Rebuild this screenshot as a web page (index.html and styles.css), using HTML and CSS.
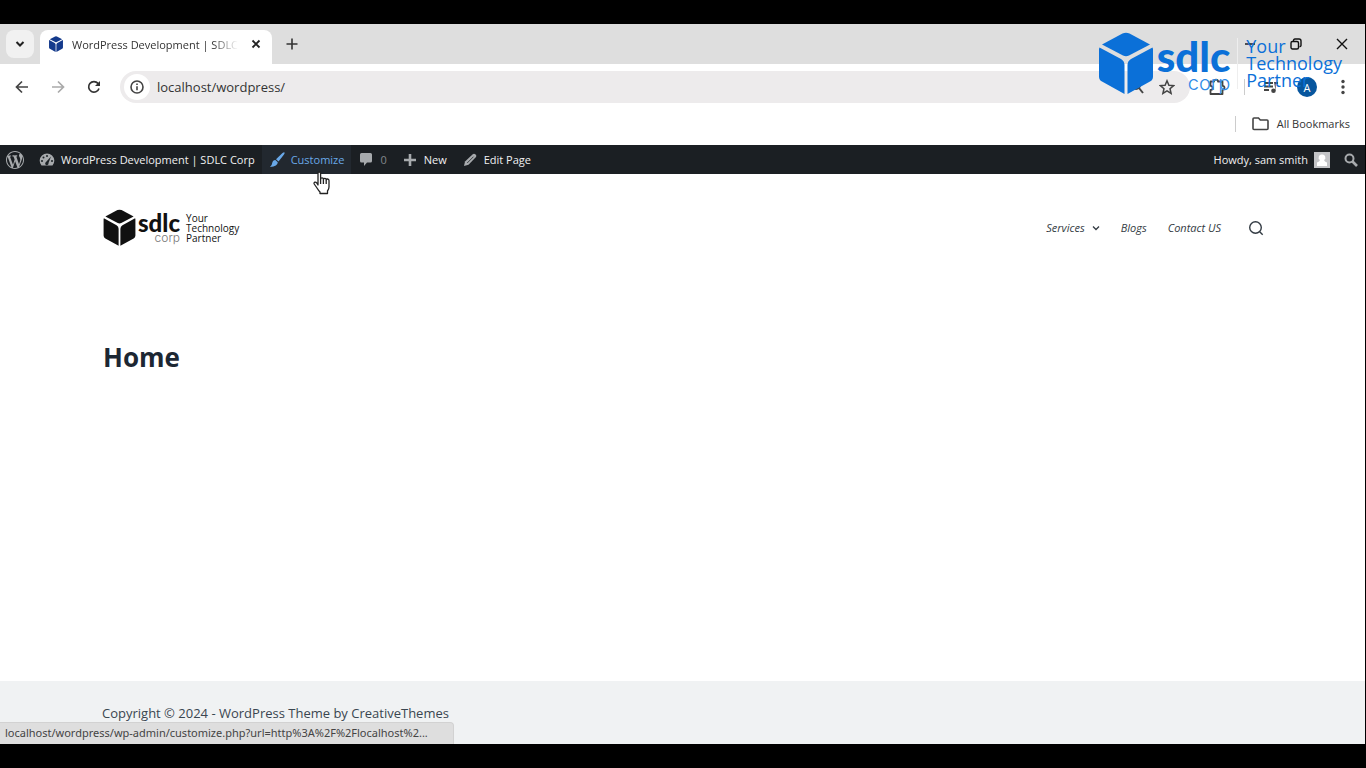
FILE: index.html
```html
<!DOCTYPE html>
<html lang="en">
<head>
  <meta charset="UTF-8" />
  <meta name="viewport" content="width=device-width, initial-scale=1" />
  <title>WordPress Development | SDLC Corp</title>
  <link rel="stylesheet" href="styles.css">
</head>
<body>
  <div class="window">
    <div class="tab-strip">
      <button class="tab-search" aria-label="Search tabs">
        <svg width="10" height="10" viewBox="0 0 10 10" fill="none" stroke="#222" stroke-width="2"><path d="M1.5 3 5 6.5 8.500 3"/></svg>
      </button>
      <div class="tab">
        <svg width="16" height="16" viewBox="0 0 56 62" fill="#143a8c"><use href="#cube"/></svg>
        <span class="tab-title">WordPress Development | SDLC Corp</span>
        <button class="icon-btn" aria-label="Close tab">
          <svg width="10" height="10" viewBox="0 0 10 10" stroke="#222" stroke-width="1.800"><path d="M1.500 1.500l7 7M8.500 1.500l-7 7"/></svg>
        </button>
      </div>
      <button class="icon-btn new-tab" aria-label="New tab">
        <svg width="12" height="12" viewBox="0 0 12 12" stroke="#333" stroke-width="1.600"><path d="M6 .5v11M.5 6h11"/></svg>
      </button>
      <div class="window-controls">
        <button class="icon-btn" aria-label="Minimize">
          <svg width="12" height="12" viewBox="0 0 12 12" stroke="#111" stroke-width="1.400"><path d="M1 6h10"/></svg>
        </button>
        <button class="icon-btn" aria-label="Restore">
          <svg width="12" height="12" viewBox="0 0 12 12" fill="none" stroke="#111" stroke-width="1.400"><rect x="1" y="3.500" width="7.500" height="7.500" rx="1.500"/><path d="M3.500 3.500V2.500Q3.500 1 5 1h4q2 0 2 2v4.500q0 1-1.500 1.200"/></svg>
        </button>
        <button class="icon-btn" aria-label="Close">
          <svg width="12" height="12" viewBox="0 0 12 12" stroke="#111" stroke-width="1.400"><path d="M1 1l10 10M11 1L1 11"/></svg>
        </button>
      </div>
    </div>

    <div class="toolbar">
      <button class="icon-btn" aria-label="Back">
        <svg width="16" height="16" viewBox="0 0 16 16" fill="none" stroke="#444" stroke-width="1.700"><path d="M14 8H3M8 2.500 2.500 8 8 13.500"/></svg>
      </button>
      <button class="icon-btn" aria-label="Forward">
        <svg width="16" height="16" viewBox="0 0 16 16" fill="none" stroke="#aaa" stroke-width="1.700"><path d="M2 8h11M8 2.500 13.500 8 8 13.500"/></svg>
      </button>
      <button class="icon-btn" aria-label="Reload">
        <svg width="16" height="16" viewBox="0 0 16 16"><path d="M13 9.500A5.300 5.300 0 1 1 12 4.400L13 5.500" fill="none" stroke="#333" stroke-width="1.700"/><path d="M14 2v5H9z" fill="#333"/></svg>
      </button>
      <div class="omnibox">
        <span class="site-info">
          <svg width="14" height="14" viewBox="0 0 14 14" fill="none" stroke="#444" stroke-width="1.600"><circle cx="7" cy="7" r="6"/><path d="M7 6.200v4M7 3.500v1.500"/></svg>
        </span>
        <input class="address" type="text" value="localhost/wordpress/" aria-label="Address">
        <button class="icon-btn" aria-label="Zoom">
          <svg width="16" height="16" viewBox="0 0 16 16" fill="none" stroke="#444" stroke-width="2"><circle cx="5" cy="6" r="4"/><path d="M8 9l4 5"/></svg>
        </button>
        <button class="icon-btn" aria-label="Bookmark this page">
          <svg width="16" height="16" viewBox="0 0 16 16" fill="none" stroke="#444" stroke-width="1.500"><path d="M8 1.800l1.900 4.400 4.700.4-3.600 3.100 1.100 4.700L8 11.900l-4.100 2.500L5 9.700 1.400 6.600l4.700-.4z"/></svg>
        </button>
      </div>
      <div class="toolbar-end">
        <button class="icon-btn" aria-label="Extensions">
          <svg width="18" height="18" viewBox="0 0 18 18" fill="none" stroke="#444" stroke-width="1.800" stroke-linejoin="round"><path d="M2.500 3.500H6a2 1.800 0 0 1 4 0h4.500v4.300a2 2 0 0 1 0 4V16h-12v-4a2 2 0 0 0 0-4.200z"/></svg>
        </button>
        <span class="divider"></span>
        <button class="icon-btn" aria-label="Media controls">
          <svg width="16" height="16" viewBox="0 0 16 16" fill="#444"><path d="M1 3h9v2H1zM1 6.500h9v2H1zM1 10h5v2H1zM11 3h4v2h-2.300v7z"/><circle cx="10.500" cy="11.800" r="2.300"/></svg>
        </button>
        <button class="profile" aria-label="Profile">A</button>
        <button class="icon-btn" aria-label="Menu">
          <svg width="16" height="16" viewBox="0 0 16 16" fill="#444"><circle cx="8" cy="2.500" r="1.700"/><circle cx="8" cy="8" r="1.700"/><circle cx="8" cy="13.500" r="1.700"/></svg>
        </button>
      </div>
    </div>

    <div class="bookmarks">
      <span class="divider"></span>
      <button class="all-bookmarks">
        <svg width="17" height="14" viewBox="0 0 17 14" fill="none" stroke="#444" stroke-width="1.600"><path d="M1 11.500V2Q1 1 2 1h4.500l1.800 2H15q1 0 1 1v7.500q0 1-1 1H2q-1 0-1-1z"/></svg>
        All Bookmarks
      </button>
    </div>

    <nav class="admin-bar">
      <a class="wp-logo" href="#" aria-label="About WordPress">
        <svg width="18" height="18" viewBox="0 0 20 20" fill="#a7aaad"><path d="M20 10c0-5.510-4.490-10-10-10C4.480 0 0 4.490 0 10c0 5.520 4.480 10 10 10 5.510 0 10-4.480 10-10zM7.780 15.370L4.370 6.220c.55-.02 1.170-.08 1.170-.08.5-.06.44-1.130-.06-1.110 0 0-1.450.11-2.370.11-.18 0-.37 0-.58-.01C4.120 2.690 6.870 1.110 10 1.110c2.330 0 4.450.87 6.050 2.340-.68-.11-1.650.39-1.650 1.580 0 .74.45 1.360.9 2.100.35.61.55 1.360.55 2.460 0 1.490-1.400 5-1.400 5l-3.030-8.370c.54-.02.82-.17.82-.17.5-.05.44-1.250-.06-1.220 0 0-1.440.12-2.380.12-.87 0-2.330-.12-2.330-.12-.5-.03-.56 1.200-.06 1.220l.92.08 1.260 3.410zM17.410 10c.24-.64.74-1.870.43-4.250.7 1.290 1.050 2.710 1.050 4.250 0 3.290-1.730 6.240-4.400 7.780.97-2.590 1.940-5.200 2.920-7.780zM6.100 18.090C3.120 16.650 1.110 13.530 1.110 10c0-1.300.23-2.480.72-3.590C3.250 10.300 4.670 14.200 6.100 18.090zm4.030-6.630l2.580 6.980c-.86.29-1.760.45-2.710.45-.79 0-1.570-.11-2.290-.33.81-2.380 1.620-4.740 2.420-7.100z"/></svg>
      </a>
      <a href="#">
        <svg width="16" height="16" viewBox="0 0 16 16"><path d="M2.500 13.500A7.300 7.300 0 1 1 13.500 13.500z" fill="#a7aaad"/><g fill="#1d2327"><circle cx="3" cy="9" r="1"/><circle cx="4.500" cy="5.500" r="1"/><circle cx="8" cy="4" r="1"/><circle cx="13" cy="9" r="1"/><path d="M12 4.500 9.500 11a1.700 1.700 0 1 1-2.500-1z"/></g></svg>
        WordPress Development | SDLC Corp
      </a>
      <a class="active" href="#">
        <svg width="16" height="16" viewBox="0 0 16 16" fill="#69a8e8"><path d="M15.500.5Q16 1 15 2.500L9.500 9.500 7 7.200 13.500 1Q15 0 15.500.5zM6.300 8l2.500 2.300q0 4-7.800 4.700 2-1.500 2.200-4Q3.800 8 6.300 8z"/></svg>
        Customize
      </a>
      <a class="comments" href="#">
        <svg width="14" height="15" viewBox="0 0 14 15" fill="#a7aaad"><path d="M2.500 1h9Q13 1 13 2.500V9q0 1.500-1.500 1.500H8L5 14v-3.500H2.500Q1 10.500 1 9V2.500Q1 1 2.500 1z"/></svg>
        0
      </a>
      <a href="#">
        <svg width="14" height="14" viewBox="0 0 14 14" stroke="#a7aaad" stroke-width="2.600"><path d="M7 1v12M1 7h12"/></svg>
        New
      </a>
      <a href="#">
        <svg width="14" height="14" viewBox="0 0 14 14" fill="#a7aaad"><path d="M9.500 1.500Q11 .2 12.500 1.500T13 4L5.500 11.700 1 13l1-4.500z"/><path d="M4.200 10 10.500 3.700" stroke="#1d2327" stroke-width=".8"/></svg>
        Edit Page
      </a>
      <div class="admin-end">
        <a href="#">
          Howdy, sam smith
          <svg width="16" height="16" viewBox="0 0 16 16"><path fill="#c3c4c7" d="M0 0h16v16H0z"/><path fill="#fff" d="M8 2.500a3 3 0 0 1 2 5.500q.5 1.500 3 2.500v3.500H3v-3.500q2.500-1 3-2.500a3 3 0 0 1 2-5.500z"/></svg>
        </a>
        <a href="#" aria-label="Search">
          <svg width="14" height="14" viewBox="0 0 14 14" fill="none" stroke="#a7aaad"><circle cx="5.500" cy="5.500" r="4" stroke-width="2"/><path d="M8.500 8.500l4.500 4.500" stroke-width="2.600"/></svg>
        </a>
      </div>
    </nav>

    <header class="site-header">
      <a class="logo" href="#">
        <svg class="logo-cube" viewBox="0 0 56 62"><g id="cube"><path d="M24.500 1.500Q28 0 31.500 1.500L52 12.500 31 23.500Q28 25 25 23.500L4 12.500z"/><path d="M1.500 15.500 23 27q3.500 2 3.500 6v29L4 49.500Q1 48 1 44.500V17z"/><path d="M54.500 15.500 33 27q-3.500 2-3.500 6v29L52 49.500q3-1.500 3-5V17z"/></g></svg>
        <span class="logo-name">
          <span class="logo-sdlc">sdlc</span>
          <span class="logo-corp">corp</span>
        </span>
        <span class="logo-tagline">Your<br>Technology<br>Partner</span>
      </a>
      <nav class="menu">
        <a href="#">Services
          <svg width="8" height="8" viewBox="0 0 8 8" fill="none" stroke="#333b43" stroke-width="1.300"><path d="M1 2.500l3 3 3-3"/></svg>
        </a>
        <a href="#">Blogs</a>
        <a href="#">Contact US</a>
        <button class="icon-btn" aria-label="Search">
          <svg width="16" height="16" viewBox="0 0 16 16" fill="none" stroke="#333b43" stroke-width="1.400"><circle cx="7.500" cy="7.500" r="5.800"/><path d="M11.700 11.700l3 3"/></svg>
        </button>
      </nav>
    </header>

    <main class="content">
      <h1>Home</h1>
    </main>

    <footer class="site-footer">Copyright © 2024 - WordPress Theme by CreativeThemes</footer>

    <div class="status-bubble">localhost/wordpress/wp-admin/customize.php?url=http%3A%2F%2Flocalhost%2...</div>
  </div>

  <div class="logo watermark">
    <svg class="logo-cube" viewBox="0 0 56 62"><use href="#cube"/></svg>
    <span class="logo-name">
      <span class="logo-sdlc">sdlc</span>
      <span class="logo-corp">corp</span>
    </span>
    <span class="logo-tagline">Your<br>Technology<br>Partner</span>
  </div>

  <svg class="cursor" width="18" height="24" viewBox="0 0 18 24" fill="#fff" stroke="#222" stroke-width="1.300" stroke-linejoin="round"><path d="M5 14V2.500Q5 1 6.300 1t1.300 1.500V8q.2-1.300 1.500-1.200 1.300.1 1.300 1.500.2-1.100 1.500-1 1.300.1 1.300 1.500.2-.9 1.400-.8 1.400.1 1.400 1.600V16q0 2-1.500 4v2.500H7V21q-1.500-1.500-3-4L1.200 13q-.5-1.300.6-1.800 1-.4 2 .8z"/><path d="M7.600 8v5M10.400 8.500V13M13.200 9v4" fill="none"/></svg>
</body>
</html>
```

FILE: styles.css
```css
* {
  box-sizing: border-box;
}
body {
  margin: 0;
  min-height: 100vh;
  padding: 24px 1px 24px 0;
  background: #000;
  color: #333;
  font-family: "Open Sans", "Noto Sans", sans-serif;
  font-size: 11px;
  display: flex;
}
a {
  color: inherit;
  text-decoration: none;
}
button {
  border: none;
  padding: 0;
  background: none;
  color: inherit;
  font: inherit;
}
svg {
  display: block;
  flex-shrink: 0;
}
.window {
  position: relative;
  flex: 1;
  min-width: 0;
  display: flex;
  flex-direction: column;
  background: #fff;
}
.icon-btn {
  display: flex;
  align-items: center;
  justify-content: center;
}
.divider {
  width: 1px;
  height: 16px;
  background: #ccc;
}

/* tabs */
.tab-strip {
  height: 40px;
  padding: 6px 0 0 6px;
  background: #dedede;
  display: flex;
  align-items: flex-start;
}
.tab-search {
  width: 28px;
  height: 28px;
  border-radius: 8px;
  background: #f1f1f1;
  display: flex;
  align-items: center;
  justify-content: center;
}
.tab {
  width: 232px;
  height: 34px;
  margin-left: 6px;
  padding: 0 11px 6px 8px;
  border-radius: 8px 8px 0 0;
  background: #fff;
  display: flex;
  align-items: center;
}
.tab-title {
  flex: 1;
  margin: 0 13px 0 8px;
  overflow: hidden;
  white-space: nowrap;
  mask-image: linear-gradient(to right, #000 85%, transparent);
}
.new-tab {
  width: 28px;
  height: 28px;
  margin-left: 6px;
}
.window-controls {
  margin-left: auto;
  display: flex;
}
.window-controls .icon-btn {
  width: 46px;
  height: 28px;
}

/* address bar */
.toolbar {
  padding: 7px 14px;
  display: flex;
  align-items: center;
  gap: 20px;
}
.omnibox {
  flex: 1;
  height: 32px;
  margin: 0 -2px;
  padding: 0 15px 0 4px;
  border-radius: 16px;
  background: #edebec;
  display: flex;
  align-items: center;
  gap: 12px;
}
.site-info {
  width: 26px;
  height: 26px;
  border-radius: 13px;
  background: #fff;
  display: flex;
  align-items: center;
  justify-content: center;
}
.address {
  flex: 1;
  min-width: 0;
  margin-left: -5px;
  padding: 0;
  border: none;
  outline: none;
  background: none;
  color: #333;
  font: 13px "Open Sans", "Noto Sans", sans-serif;
}
.toolbar-end {
  display: flex;
  align-items: center;
  gap: 18px;
}
.profile {
  width: 20px;
  height: 20px;
  border-radius: 50%;
  background: #07569e;
  color: #fff;
}

/* bookmarks bar */
.bookmarks {
  height: 35px;
  padding: 0 15px 8px 0;
  display: flex;
  align-items: center;
  justify-content: flex-end;
  gap: 16px;
}
.all-bookmarks {
  display: flex;
  align-items: center;
  gap: 8px;
}

/* admin bar */
.admin-bar {
  height: 29px;
  background: #1b1f23;
  color: #f0f0f1;
  display: flex;
}
.admin-bar a {
  height: 100%;
  padding: 0 7px;
  display: flex;
  align-items: center;
  gap: 6px;
}
.admin-bar .wp-logo {
  padding: 0 8px 0 6px;
}
.admin-bar .active {
  background: #22282f;
  color: #69a8e8;
}
.admin-bar .active ~ a {
  padding: 0 8px;
  gap: 7px;
}
.admin-bar .comments {
  color: #83878b;
}
.admin-end {
  margin-left: auto;
  display: flex;
}

/* site */
.site-header {
  height: 107px;
  padding: 0 101px 0 103px;
  display: flex;
  align-items: center;
  justify-content: space-between;
}
.logo {
  display: flex;
  align-items: center;
  color: #111;
  white-space: nowrap;
}
.logo-cube {
  width: 33px;
  height: 37px;
  fill: currentColor;
}
.logo-name {
  margin-left: 2px;
  display: flex;
  flex-direction: column;
  align-items: flex-end;
}
.logo-sdlc {
  font: 900 24px/20px Lato, sans-serif;
}
.logo-corp {
  color: #777;
  font: 300 12px/10px Inter, sans-serif;
}
.logo-tagline {
  margin-left: 6px;
  font-size: 10px;
  line-height: 10px;
}
.menu {
  display: flex;
  align-items: center;
  gap: 21px;
  color: #333b43;
  font-style: italic;
}
.menu a {
  display: flex;
  align-items: center;
  gap: 7px;
}
.menu .icon-btn {
  margin-left: 6px;
}
.content {
  flex: 1;
  padding: 57px 103px;
}
.content h1 {
  margin: 0;
  color: #1c2733;
  font-size: 26px;
  line-height: 38px;
}
.site-footer {
  height: 63px;
  padding: 22px 102px;
  background: #f0f2f3;
  color: #3a4650;
  font-size: 13px;
  line-height: 20px;
}

/* things that float over the page */
.status-bubble {
  position: absolute;
  left: 0;
  bottom: 0;
  width: 454px;
  height: 22px;
  padding: 0 5px;
  border-top: 1px solid #d2d2d2;
  border-right: 1px solid #d2d2d2;
  border-radius: 0 4px 0 0;
  background: #dedede;
  color: #444;
  font-family: "Noto Sans", sans-serif;
  line-height: 20px;
  white-space: nowrap;
}
.watermark {
  position: absolute;
  top: 32px;
  right: 24px;
  color: #0b70d8;
}
.watermark .logo-cube {
  width: 56px;
  height: 62px;
}
.watermark .logo-name {
  margin-left: 3px;
}
.watermark .logo-sdlc {
  font-size: 42px;
  line-height: 40px;
}
.watermark .logo-corp {
  color: #2f8be6;
  font-size: 20px;
  line-height: 14px;
}
.watermark .logo-tagline {
  margin-left: 7px;
  padding-left: 8px;
  border-left: 1px solid #eee;
  font-size: 18px;
  line-height: 17px;
}
.cursor {
  position: absolute;
  left: 313px;
  top: 171px;
}
```
